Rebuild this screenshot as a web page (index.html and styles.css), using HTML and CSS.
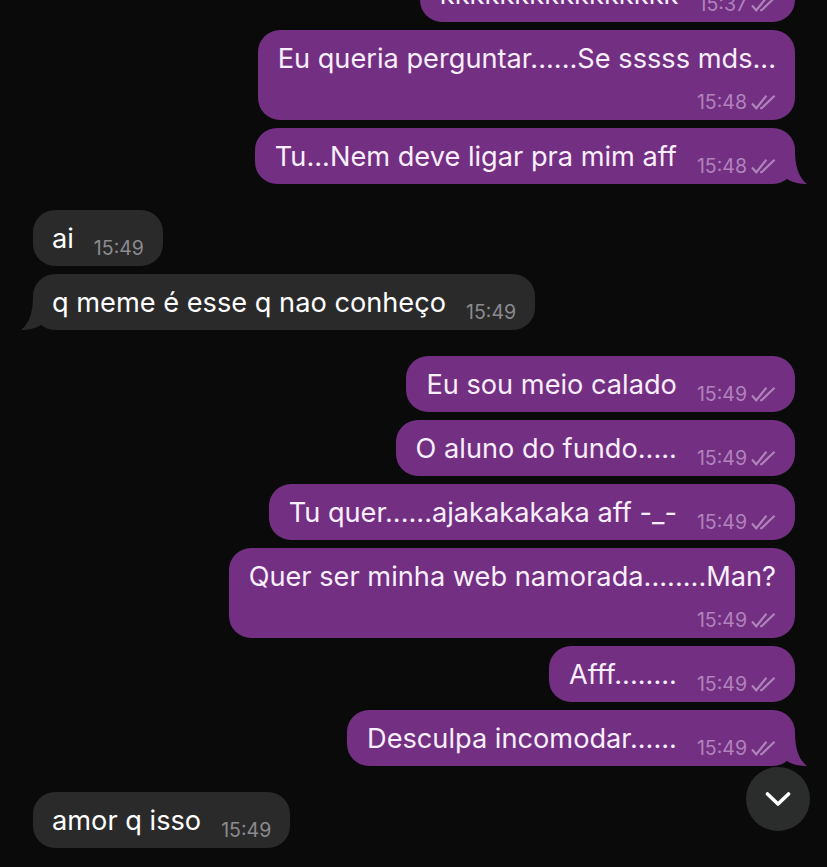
FILE: index.html
```html
<!DOCTYPE html>
<html lang="pt">
<head>
<meta charset="utf-8">
<title>Chat</title>
<link rel="stylesheet" href="styles.css">
</head>
<body>
<svg class="defs" width="0" height="0" aria-hidden="true">
  <symbol id="ticks" viewBox="0 0 26 16">
    <path d="M1 9.5 L5.5 14.5 L16 1.5 M9.5 14.5 L11 14.5 L24.5 1.5" fill="none" stroke="currentColor" stroke-width="2.2"/>
  </symbol>
  <symbol id="tail" viewBox="0 0 20 34">
    <path d="M0 0 H8 C8 15 11 27 20 34 C14 34 6 33 0 29 Z" fill="currentColor"/>
  </symbol>
</svg>
<main class="chat">
  <div class="msg out first"><span class="text">kkkkkkkkkkkkkkkk</span><span class="meta">15:37<svg class="check"><use href="#ticks"/></svg></span></div>
  <div class="msg out wrap"><span class="text">Eu queria perguntar......Se sssss mds...</span><span class="meta">15:48<svg class="check"><use href="#ticks"/></svg></span></div>
  <div class="msg out last"><span class="text">Tu...Nem deve ligar pra mim aff</span><span class="meta">15:48<svg class="check"><use href="#ticks"/></svg></span><svg class="tail"><use href="#tail"/></svg></div>

  <div class="msg in"><span class="text">ai</span><span class="meta">15:49</span></div>
  <div class="msg in last"><span class="text">q meme é esse q nao conheço</span><span class="meta">15:49</span><svg class="tail"><use href="#tail"/></svg></div>

  <div class="msg out"><span class="text">Eu sou meio calado</span><span class="meta">15:49<svg class="check"><use href="#ticks"/></svg></span></div>
  <div class="msg out"><span class="text">O aluno do fundo.....</span><span class="meta">15:49<svg class="check"><use href="#ticks"/></svg></span></div>
  <div class="msg out"><span class="text">Tu quer......ajakakakaka aff -_-</span><span class="meta">15:49<svg class="check"><use href="#ticks"/></svg></span></div>
  <div class="msg out wrap"><span class="text">Quer ser minha web namorada........Man?</span><span class="meta">15:49<svg class="check"><use href="#ticks"/></svg></span></div>
  <div class="msg out"><span class="text">Afff........</span><span class="meta">15:49<svg class="check"><use href="#ticks"/></svg></span></div>
  <div class="msg out last"><span class="text">Desculpa incomodar......</span><span class="meta">15:49<svg class="check"><use href="#ticks"/></svg></span><svg class="tail"><use href="#tail"/></svg></div>

  <div class="msg in last"><span class="text">amor q isso</span><span class="meta">15:49</span></div>
</main>
<button class="scroll" type="button" aria-label="Ir para o fim">
  <svg width="26" height="16" viewBox="0 0 26 16"><path d="M2.5 3 L13 13 L23.5 3" fill="none" stroke="#fff" stroke-width="3.6" stroke-linecap="round" stroke-linejoin="round"/></svg>
</button>
</body>
</html>
```
FILE: styles.css
```css
html, body {
  margin: 0;
  height: 100%;
}
body {
  position: relative;
  overflow: hidden;
  background: #0a0a0b;
  font-family: Inter, "Liberation Sans", sans-serif;
}
.defs {
  position: absolute;
}
.chat {
  display: flex;
  flex-direction: column;
  gap: 8px;
  margin-top: -34px;
  padding: 0 32px 0 33px;
}
.msg {
  position: relative;
  display: flex;
  justify-content: space-between;
  gap: 20px;
  padding: 13px 19px 0 19px;
  height: 56px;
  box-sizing: border-box;
  border-radius: 22px;
}
.msg.out {
  align-self: flex-end;
  padding-left: 20px;
  background: #732f82;
  color: #f9eefb;
}
.msg.in {
  align-self: flex-start;
  background: #2a2a2b;
  color: #fff;
}
.msg.last {
  margin-bottom: 18px;
}
.msg.wrap {
  flex-direction: column;
  gap: 16px;
  height: 90px;
}
.text {
  font-size: 27.2px;
  line-height: 32px;
  white-space: nowrap;
}
.meta {
  display: flex;
  align-self: flex-end;
  align-items: center;
  justify-content: flex-end;
  gap: 4px;
  height: 22px;
  margin-bottom: 7px;
  font-size: 19.5px;
  color: #b183bd;
  white-space: nowrap;
}
.msg.in .meta {
  color: #8b8b8d;
}
.check {
  width: 25px;
  height: 16px;
}
.tail {
  position: absolute;
  bottom: 0;
  width: 20px;
  height: 34px;
}
.msg.out .tail {
  right: -12px;
  color: #732f82;
}
.msg.in .tail {
  left: -12px;
  color: #2a2a2b;
  transform: scaleX(-1);
}
.scroll {
  position: absolute;
  left: 746px;
  top: 767px;
  width: 64px;
  height: 64px;
  padding: 0;
  border: 0;
  border-radius: 50%;
  background: #2b2d2d;
  display: flex;
  align-items: center;
  justify-content: center;
}
```
